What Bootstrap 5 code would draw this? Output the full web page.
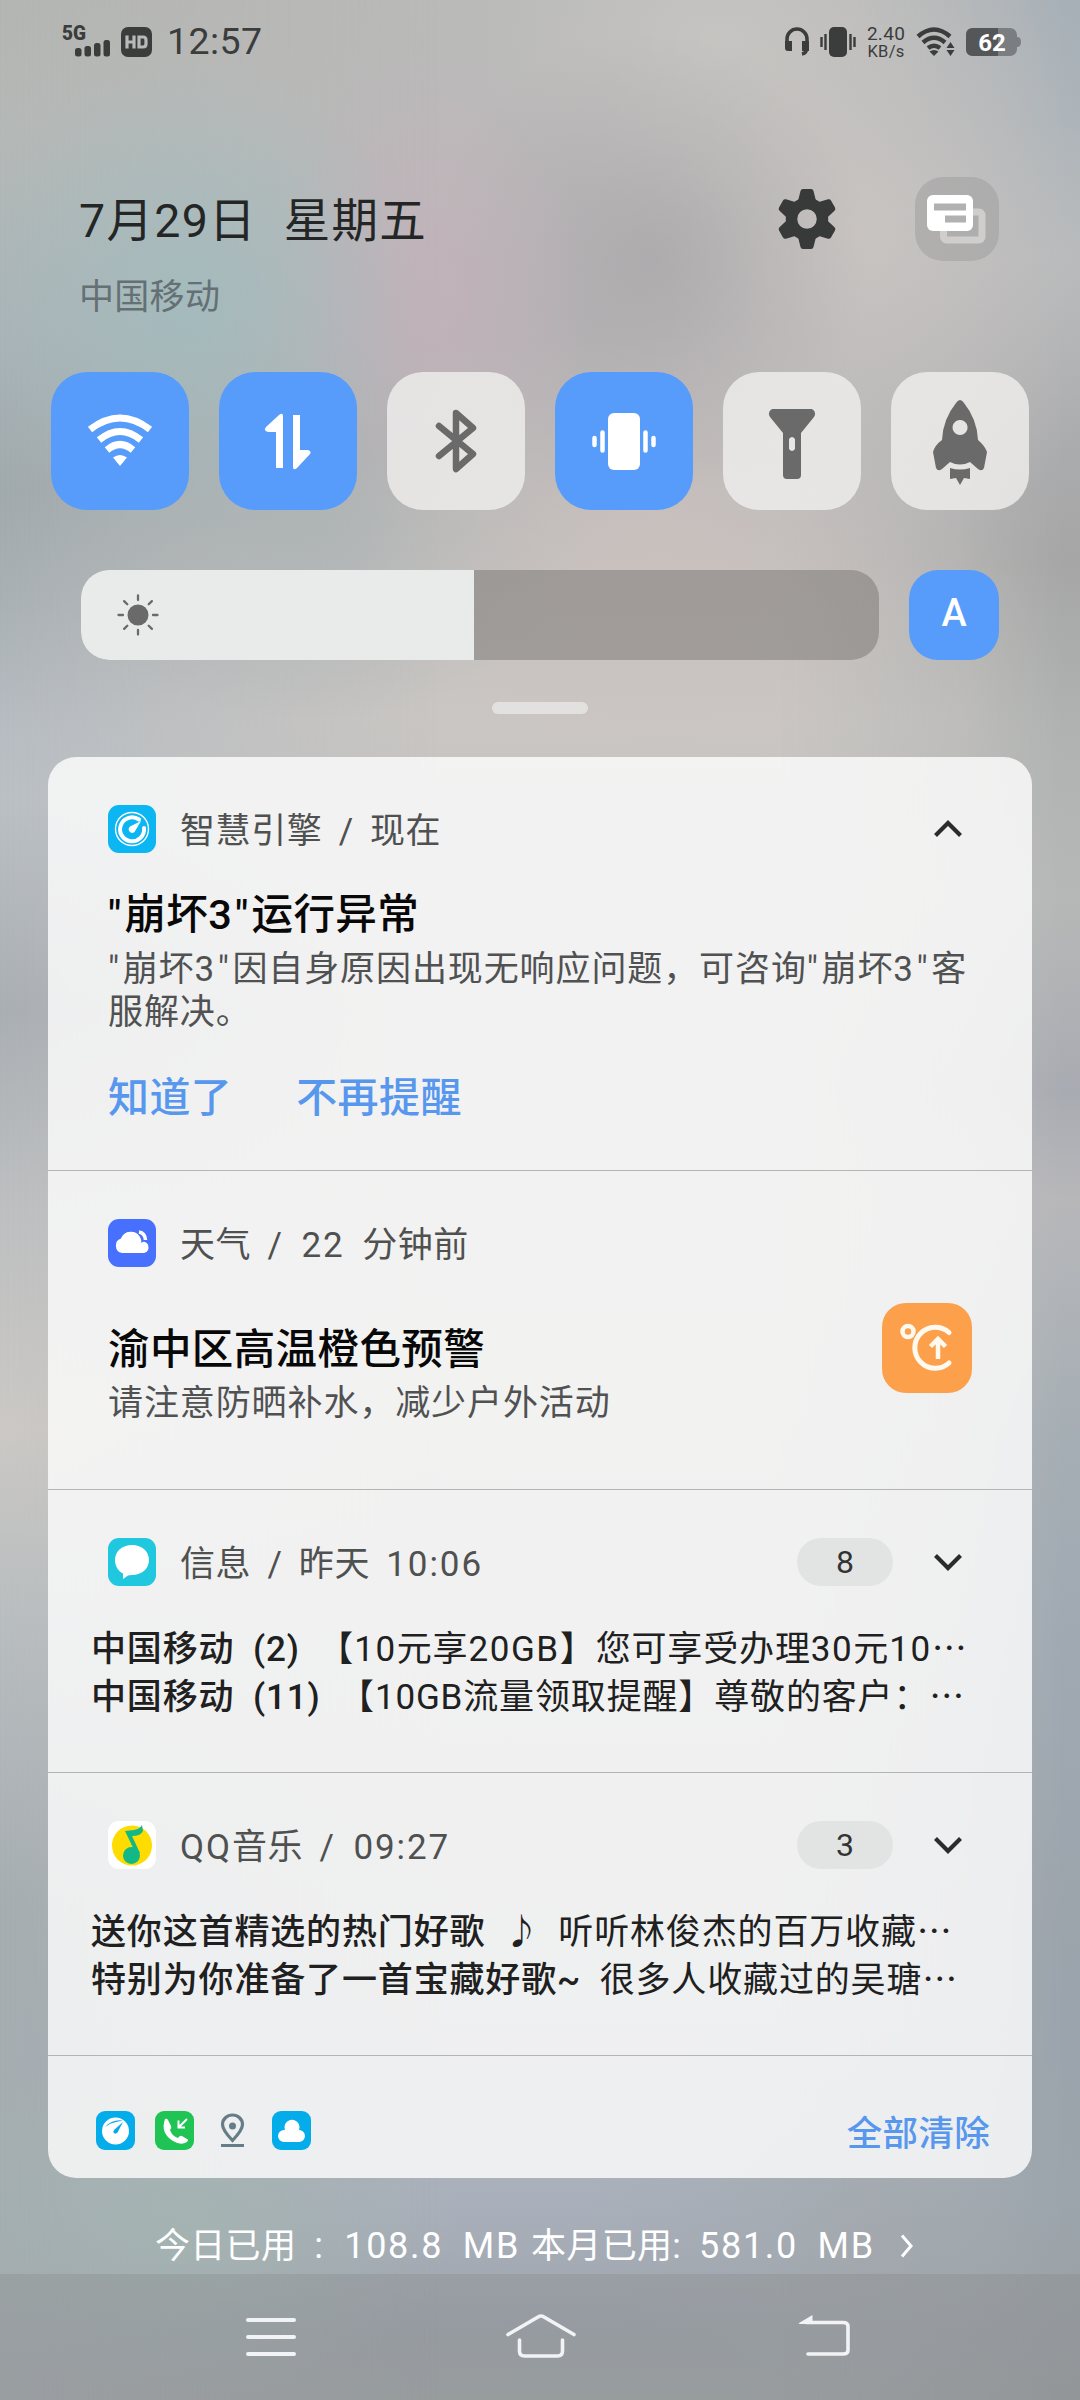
<!DOCTYPE html>
<html lang="zh-CN">
<head>
<meta charset="utf-8">
<meta name="viewport" content="width=device-width, initial-scale=1">
<title>通知中心</title>
<link href="https://cdn.jsdelivr.net/npm/bootstrap@5.3.0/dist/css/bootstrap.min.css" rel="stylesheet">
<style>
  body{font-family:Roboto,"Noto Sans CJK SC",sans-serif;background:#b7b8b8;color:#222;line-height:1}
  .phone{width:1080px;height:2400px;isolation:isolate}
  .wallpaper,.wallpaper div{position:absolute;inset:0}
  .wallpaper{z-index:-1}
  .wp-mid{background:linear-gradient(180deg,#babab9 0,#bbb9ba 200px,#b9b6b8 330px,#b6b6b7 460px,#c4c2c0 600px,#cac6c3 720px,#c6c4c2 800px,#c2c0be 1400px,#b4b6b9 1900px,#aab0bb 2200px,#9ea5ad 2330px,#a0a6a8 2400px)}
  .wp-left{background:linear-gradient(180deg,#b3b5b2 0,#b4b8b6 140px,#aab3b7 330px,#a0a9ac 490px,#a9b0b4 600px,#b6bcc1 730px,#b9bfc3 800px,#a9aeb2 1010px,#bcbec0 1200px,#cbc8c5 1430px,#b8bdbf 1620px,#a6adb1 1900px,#a4acb0 2200px,#a3a9ad 2400px);-webkit-mask-image:linear-gradient(90deg,#000 0,rgba(0,0,0,.45) 220px,transparent 440px);mask-image:linear-gradient(90deg,#000 0,rgba(0,0,0,.45) 220px,transparent 440px)}
  .wp-right{background:linear-gradient(180deg,#a7b0b7 0,#a9b2b8 120px,#b5b8ba 260px,#acadaf 420px,#a6a6a6 560px,#afb2b1 720px,#b6b8b7 900px,#a9abb2 1090px,#b7b7ba 1200px,#a5aeb4 1440px,#a0a9b2 1650px,#9ca4ac 1900px,#9aa4ac 2200px,#999da1 2400px);-webkit-mask-image:linear-gradient(90deg,transparent 780px,rgba(0,0,0,.45) 960px,#000 1060px);mask-image:linear-gradient(90deg,transparent 780px,rgba(0,0,0,.45) 960px,#000 1060px)}
  .wp-spots{background:
    radial-gradient(230px 240px at 190px 300px,rgba(155,190,192,.62),rgba(155,190,192,.3) 50%,rgba(155,190,192,0)),
    radial-gradient(160px 240px at 430px 290px,rgba(200,174,186,.52),rgba(200,174,186,.26) 50%,rgba(200,174,186,0)),
    radial-gradient(220px 230px at 650px 260px,rgba(168,165,168,.7),rgba(168,165,168,.3) 50%,rgba(168,165,168,0)),
    radial-gradient(280px 330px at 860px 230px,rgba(203,198,195,.85),rgba(203,198,195,.4) 50%,rgba(203,198,195,0)),
    radial-gradient(240px 180px at 710px 40px,rgba(199,198,195,.8),rgba(199,198,195,.4) 50%,rgba(199,198,195,0)),
    radial-gradient(320px 220px at 660px 540px,rgba(206,194,190,.7),rgba(206,194,190,.35) 50%,rgba(206,194,190,0)),
    radial-gradient(280px 190px at 310px 530px,rgba(172,179,180,.7),rgba(172,179,180,.35) 50%,rgba(172,179,180,0)),
    radial-gradient(280px 180px at 180px 2220px,rgba(164,182,177,.7),rgba(164,182,177,.3) 50%,rgba(164,182,177,0)),
    radial-gradient(300px 240px at 880px 2230px,rgba(162,168,171,.7),rgba(162,168,171,.3) 50%,rgba(162,168,171,0))}
  .bar-ink{color:#3b3c3c}
  .status-row{height:84px;padding:0 59px 0 62px}
  .date-text{font-size:46.500px;color:#242626;letter-spacing:1.300px;word-spacing:14px}
  .carrier{font-size:35px;color:#647073;letter-spacing:.3px}
  .tile-btn{width:138px;height:138px;border-radius:36px;background:rgba(242,241,240,.78);color:#6a6a6a}
  .tile-btn.on{background:#579cfb;color:#fff}
  .lite-btn{width:84px;height:84px;border-radius:28px;background:rgba(150,150,150,.42)}
  .bright{width:798px;height:90px;border-radius:28px;background:rgba(100,97,94,.4)}
  .bright-fill{width:393px;background:#e9eaea}
  .auto-btn{width:90px;height:90px;border-radius:29px;background:#579cfb;color:#fff;font-size:38px;font-weight:500;padding-bottom:4px}
  .handle{width:96px;height:12px;background:#e3e1df}
  .panel{width:984px;border-radius:28px;background:rgba(252,253,253,.82)}
  .sect{border-bottom:1px solid #b2b4b5;padding:48px 60px 0}
  .head{height:48px;font-size:35px;color:#4f5050;letter-spacing:.6px;word-spacing:7px;padding-right:9px}
  .head .src{padding-top:4px;margin-right:auto}
  .head svg.app{width:48px;height:48px;margin-right:24px}
  .lat{letter-spacing:1.900px}
  .q1{letter-spacing:3.200px}
  .ttl{font-size:41.500px;font-weight:500;color:#080808;letter-spacing:.4px;line-height:54px}
  .bodytxt{font-size:35px;letter-spacing:.9px;line-height:42.700px;color:#505152}
  .bodytxt .q1{letter-spacing:3.500px}
  .act{color:#5797ee;font-size:41px;font-weight:500;letter-spacing:.4px}
  .count{width:96px;height:48px;background:#e2e4e4;color:#333;font-size:32px;letter-spacing:0;margin-right:40px}
  .lines{margin:40px -40px 0 -17px;font-size:35px;letter-spacing:.85px;line-height:48px;color:#202020;word-spacing:9px;white-space:nowrap}
  .lines b{font-weight:500}
  .lines .lat{letter-spacing:1.600px}
  .usage{color:#fff;font-size:35px;height:96px;word-spacing:9px;letter-spacing:.3px}
  .usage .lat{font-size:36px;letter-spacing:1.700px}
  .navb{height:126px;background:rgba(126,128,128,.26);color:#f2f3f4}
</style>
</head>
<body>
<div class="phone position-relative overflow-hidden d-flex flex-column">
  <div class="wallpaper"><div class="wp-mid"></div><div class="wp-left"></div><div class="wp-right"></div><div class="wp-spots"></div></div>

  <header class="status-row d-flex align-items-center justify-content-between bar-ink flex-shrink-0">
    <div class="d-flex align-items-center">
      <svg width="52" height="40" viewBox="0 0 52 40"><text x="0" y="18" font-size="20" font-weight="900" textLength="24" lengthAdjust="spacingAndGlyphs" fill="currentColor">5G</text><g fill="currentColor"><rect x="13" y="26" width="6.500" height="8.500" rx="2.500"/><rect x="22.500" y="24" width="6.500" height="10.500" rx="2.500"/><rect x="32" y="21" width="6.500" height="13.500" rx="2.500"/><rect x="41.500" y="18" width="6.500" height="16.500" rx="2.500"/></g></svg>
      <svg width="31" height="30" viewBox="0 0 31 30" style="margin-left:7px"><rect width="31" height="30" rx="7" fill="currentColor"/><g fill="none" stroke="#b8bab9" stroke-width="3.200"><path d="M6 8.500v13M13 8.500v13M6 15h7M18 10h4q3 0 3 3v4q0 3-3 3h-4z"/></g></svg>
      <span style="font-size:37.500px;margin-left:15px;letter-spacing:.4px">12:57</span>
    </div>
    <div class="d-flex align-items-center">
      <svg width="26" height="32" viewBox="0 0 26 32"><path d="M3 21v-8a10 10 0 0 1 20 0v8q0 6-5 7" fill="none" stroke="currentColor" stroke-width="3.500"/><path d="M1 15h7v10H4q-3 0-3-3zM18 15h7v10h-7z" fill="currentColor"/></svg>
      <svg style="margin-left:10px" width="36" height="30" viewBox="0 0 36 30"><rect x="9" width="18" height="30" rx="5" fill="currentColor"/><path d="M1.500 10v10M5.500 7v16M30.500 7v16M34.500 10v10" stroke="currentColor" stroke-width="2.400"/></svg>
      <div class="text-center" style="font-size:19px;line-height:17px;margin-left:9px;width:42px;letter-spacing:.3px">2.40<br><span style="font-size:16.500px">KB/s</span></div>
      <svg style="margin-left:9px" width="40" height="30" viewBox="0 0 40 30"><g fill="none" stroke="currentColor" stroke-width="4.500"><path d="M2 9.500q16-14 32 0"/><path d="M7 15.500q11-9.500 22 0"/><path d="M12 21q6-4.500 12 0"/></g><path d="M13.500 24.500q4.500-3 9 0L18 29z" fill="currentColor"/><path d="M34.500 15l4 6h-8zM30.500 23h8l-4 6z" fill="currentColor"/></svg>
      <svg style="margin-left:10px" width="55" height="28" viewBox="0 0 55 28"><rect width="51" height="28" rx="7" fill="#7b7e80"/><path d="M7 0h25v28H7q-7 0-7-7V7q0-7 7-7z" fill="#555657"/><path d="M51 9q4 0 4 5t-4 5z" fill="#7b7e80"/><text x="26" y="22.500" font-size="24" font-weight="700" fill="#fff" text-anchor="middle">62</text></svg>
    </div>
  </header>

  <section class="d-flex justify-content-between flex-shrink-0" style="height:288px;padding:93px 81px 0 79px">
    <div class="d-flex flex-column">
      <div class="date-text" style="padding-top:21px">7月29日 星期五</div>
      <div class="carrier" style="margin-top:35px">中国移动</div>
    </div>
    <div class="d-flex">
      <svg style="margin:12px 78px 0 0" width="60" height="60" viewBox="-30 -30 60 60"><g fill="#383939"><path id="g" d="M-9 -18L-6.500 -28Q-6 -30 -4 -30H4Q6 -30 6.500 -28L9 -18Q0 -12-9-18z"/><use href="#g" transform="rotate(60)"/><use href="#g" transform="rotate(120)"/><use href="#g" transform="rotate(180)"/><use href="#g" transform="rotate(240)"/><use href="#g" transform="rotate(300)"/></g><circle r="15.500" fill="none" stroke="#383939" stroke-width="11.500"/></svg>
      <div class="lite-btn"><svg width="84" height="84" viewBox="0 0 84 84"><rect x="28.500" y="35" width="38.500" height="28" rx="3" fill="none" stroke="#cfcecd" stroke-width="7"/><rect x="12" y="18" width="46" height="36" rx="6" fill="#fff"/><path d="M19 26.500h32v7H19zM30 38.500h21v7H30z" fill="#b2b1b1"/></svg></div>
    </div>
  </section>

  <section class="d-flex justify-content-between flex-shrink-0" style="padding:0 51px">
    <div class="tile-btn on d-flex align-items-center justify-content-center"><svg width="66" height="56" viewBox="0 0 66 56"><g fill="none" stroke="currentColor" stroke-width="7"><path d="M3 16.500q30-23 60 0"/><path d="M12 27q21-17 42 0"/><path d="M20 37q13-11 26 0"/></g><path d="M26 44.500q7-5 14 0L33 53z" fill="currentColor"/></svg></div>
    <div class="tile-btn on d-flex align-items-center justify-content-center"><svg width="48" height="60" viewBox="0 0 48 60"><path d="M12 57V21H4Q-1 20 2 16L15 4q4-3 4 1v52zM29 4h7v35h8q4 1 2 4L33 57q-4 3-4-1z" fill="currentColor"/></svg></div>
    <div class="tile-btn d-flex align-items-center justify-content-center"><svg width="42" height="64" viewBox="0 0 42 64"><path d="M4 17L38 45 21 60V4L38 19 4 47" fill="none" stroke="currentColor" stroke-width="6.500" stroke-linecap="round" stroke-linejoin="round"/></svg></div>
    <div class="tile-btn on d-flex align-items-center justify-content-center"><svg width="66" height="58" viewBox="0 0 66 58"><rect x="17" y="1" width="32" height="57" rx="6" fill="currentColor"/><path d="M11.500 20.500v18M54.500 20.500v18M3.500 26v7M62.500 26v7" stroke="currentColor" stroke-width="4.500" stroke-linecap="round"/></svg></div>
    <div class="tile-btn d-flex align-items-center justify-content-center"><svg width="48" height="72" viewBox="0 0 48 72" style="margin-top:6px"><path fill-rule="evenodd" d="M4 1h40q5 3 2 8L33 25v42q0 4-4 4H19q-4 0-4-4V25L2 9Q-1 4 4 1zM21 31v10q3 4 6 0V31q-3-4-6 0z" fill="currentColor"/></svg></div>
    <div class="tile-btn d-flex align-items-center justify-content-center"><svg width="54" height="86" viewBox="0 0 54 86" style="margin-top:4px"><path fill-rule="evenodd" d="M27 0q2 0 4 3Q44 19 45 40q7 6 9 12l-3 16q-2 4-6 1l-8-7q-10 5-20 0l-8 7q-4 3-6-1L0 52q2-7 9-12Q10 19 23 3q2-3 4-3zm0 20a7.500 7.500 0 1 0 .1 0z" fill="currentColor"/><path d="M17 68q10 3 20 0v11l-6-1-4 7-4-7-6 1z" fill="currentColor"/></svg></div>
  </section>

  <section class="d-flex justify-content-between flex-shrink-0" style="padding:60px 81px 0">
    <div class="bright overflow-hidden d-flex">
      <div class="bright-fill d-flex align-items-center"><svg style="margin-left:36px" width="42" height="42" viewBox="-21 -21 42 42"><circle r="10.500" fill="#6a6a6a"/><g stroke="#6a6a6a" stroke-width="2.300" stroke-linecap="round"><path d="M0-15v-4.500M0 15v4.500M-15 0h-4.500M15 0h4.500M-10.700-10.700l-3.200-3.200M10.700 10.700l3.200 3.200M-10.700 10.700l-3.200 3.200M10.700-10.700l3.200-3.200"/></g></svg></div>
    </div>
    <div class="auto-btn d-flex align-items-center justify-content-center">A</div>
  </section>
  <div class="handle rounded-pill mx-auto flex-shrink-0" style="margin-top:42px"></div>

  <main class="panel mx-auto overflow-hidden flex-shrink-0" style="margin-top:43px">
    <article class="sect" style="height:414px">
      <div class="head d-flex align-items-center">
        <svg class="app" viewBox="0 0 48 48"><rect width="48" height="48" rx="11" fill="#0bb6f3"/><circle cx="24" cy="24" r="16.500" fill="none" stroke="#fff" stroke-width="1.400"/><path d="M31 14.500A12 12 0 1 0 36 23" fill="none" stroke="#fff" stroke-width="4" stroke-linecap="round"/><path d="M33 16L26.500 27q-3 2-5-.5t.5-5z" fill="#fff"/></svg>
        <span class="src">智慧引擎 / 现在</span>
        <svg width="30" height="20" viewBox="0 0 30 20"><path d="M2.500 16.500L15 4l12.500 12.500" fill="none" stroke="#2b2b2b" stroke-width="4.200"/></svg>
      </div>
      <div class="ttl" style="margin-top:35px"><span class="q1">"</span>崩坏<span class="q1">3"</span>运行异常</div>
      <div class="bodytxt" style="margin-top:7px"><span class="q1">"</span>崩坏<span class="q1">3"</span>因自身原因出现无响应问题，可咨询<span class="q1">"</span>崩坏<span class="q1">3"</span>客<br>服解决。</div>
      <div class="d-flex act" style="margin-top:44px;gap:64px"><span>知道了</span><span>不再提醒</span></div>
    </article>

    <article class="sect" style="height:319px">
      <div class="head d-flex align-items-center">
        <svg class="app" viewBox="0 0 48 48"><rect width="48" height="48" rx="11" fill="#4670fd"/><path d="M14 34a7.500 7.500 0 0 1-1-14.500A10.500 10.500 0 0 1 32 18q2 4 1 6 4-3 7 1.500 2 7-4 8.500z" fill="#fff"/><path d="M31 13q6 1 6.500 8" fill="none" stroke="#fff" stroke-width="3.500"/></svg>
        <span class="src">天气 <span class="lat">/ 22 </span>分钟前</span>
      </div>
      <div class="d-flex justify-content-between">
        <div><div class="ttl" style="margin-top:56px">渝中区高温橙色预警</div><div class="bodytxt" style="margin-top:6px">请注意防晒补水，减少户外活动</div></div>
        <svg style="margin-top:36px" width="90" height="90" viewBox="0 0 90 90"><rect width="90" height="90" rx="24" fill="#fda04b"/><g fill="none" stroke="#fffaf0"><circle cx="26" cy="28.500" r="5.500" stroke-width="4.500"/><path d="M67 29.500A20.500 20.500 0 1 0 67 60" stroke-width="5" stroke-linecap="round"/><path d="M56 56V37M48.500 43.500L56 36l7.500 7.500" stroke-width="4.500"/></g></svg>
      </div>
    </article>

    <article class="sect" style="height:283px">
      <div class="head d-flex align-items-center">
        <svg class="app" viewBox="0 0 48 48"><rect width="48" height="48" rx="11" fill="#20c8df"/><path d="M24 7c10 0 17 6.500 17 15S34 37 24 37q-3 0-4 .5L15 41v-5.500C10 33 7 28 7 22 7 13.500 14 7 24 7z" fill="#fff"/></svg>
        <span class="src">信息 / 昨天 <span class="lat">10:06</span></span>
        <span class="count rounded-pill d-flex align-items-center justify-content-center">8</span>
        <svg width="30" height="20" viewBox="0 0 30 20"><path d="M2.500 3.500L15 16 27.500 3.500" fill="none" stroke="#2b2b2b" stroke-width="4.200"/></svg>
      </div>
      <div class="lines"><div><b>中国移动 (2)</b> 【<span class="lat">10</span>元享<span class="lat">20GB</span>】您可享受办理<span class="lat">30</span>元<span class="lat">10</span>⋯</div><div><b>中国移动 (11)</b> 【10GB流量领取提醒】尊敬的客户：⋯</div></div>
    </article>

    <article class="sect" style="height:283px">
      <div class="head d-flex align-items-center">
        <svg class="app" viewBox="0 0 48 48"><rect width="48" height="48" rx="11" fill="#fff"/><circle cx="24" cy="24.500" r="20" fill="#ffdc00"/><circle cx="23.500" cy="34.500" r="8.500" fill="#12b886"/><path d="M28 33L17 10l9-1q6-1 8-5l1 6q-2 5-11 5l8 17z" fill="#12b886"/></svg>
        <span class="src"><span class="lat">QQ</span>音乐 <span class="lat">/ 09:27</span></span>
        <span class="count rounded-pill d-flex align-items-center justify-content-center">3</span>
        <svg width="30" height="20" viewBox="0 0 30 20"><path d="M2.500 3.500L15 16 27.500 3.500" fill="none" stroke="#2b2b2b" stroke-width="4.200"/></svg>
      </div>
      <div class="lines"><div><b>送你这首精选的热门好歌 ♪</b> 听听林俊杰的百万收藏⋯</div><div><b>特别为你准备了一首宝藏好歌~</b> 很多人收藏过的吴瑭⋯</div></div>
    </article>

    <footer class="d-flex align-items-center justify-content-between" style="height:122px;padding:0 42px 0 48px">
      <div class="d-flex" style="gap:19.500px;padding-top:27px">
        <svg width="39" height="39" viewBox="0 0 39 39"><rect width="39" height="39" rx="9" fill="#05acea"/><circle cx="19.500" cy="20" r="13.500" fill="#fff"/><path d="M9 16q7-8 18-6.500L20 11q-6 1-11 5zM27 11l-5.500 10.500q-2 2-3.500.5t.5-3.500z" fill="#05acea"/></svg>
        <svg width="39" height="39" viewBox="0 0 39 39"><rect width="39" height="39" rx="9" fill="#1fc454"/><path d="M10 8q2-1 3 1l3 6q1 2-1 4 2 6 8 8 2-3 4-2l5 3q2 1 0 3-6 4-14-1Q5 22 10 8z" fill="#fff"/><path d="M32 8l-8 8M23.500 9.500V16.500H30" fill="none" stroke="#fff" stroke-width="2"/></svg>
        <svg width="39" height="39" viewBox="0 0 39 39"><g fill="none" stroke="#667d87" stroke-width="3.200"><path d="M19.500 29.500Q9.500 19 9.500 13.500a10 9.500 0 0 1 20 0Q29.500 19 19.500 29.500z"/><path d="M8 34.500h23"/></g><circle cx="19.500" cy="15" r="3.500" fill="#667d87"/></svg>
        <svg width="39" height="39" viewBox="0 0 39 39"><rect width="39" height="39" rx="9" fill="#05acea"/><path d="M12 31a6 6 0 0 1 0-12h1a7.500 7.500 0 1 1 14 0 6 6 0 0 1 0 12z" fill="#fff"/></svg>
      </div>
      <div class="act" style="font-size:35.500px;letter-spacing:.3px;padding-top:35px">全部清除</div>
    </footer>
  </main>

  <div class="usage d-flex align-items-center flex-shrink-0" style="padding:40px 0 0 155px;gap:11px">
    <span>今日已用 <span class="lat">: 108.8 MB</span></span><span>本月已用: <span class="lat">581.0 MB</span></span><svg style="margin-left:14px" width="14" height="26" viewBox="0 0 14 26"><path d="M2 2.500L11 13 2 23.500" fill="none" stroke="#fff" stroke-width="3"/></svg>
  </div>

  <nav class="navb d-flex flex-shrink-0">
    <div class="d-flex" style="padding:38px 0 0 246px">
      <svg width="50" height="50" viewBox="0 0 50 50"><path d="M2 8h46M2 25h46M2 42h46" stroke="currentColor" stroke-width="4" stroke-linecap="round"/></svg>
      <svg style="margin-left:210px" width="70" height="50" viewBox="0 0 70 50"><path d="M2 22.500L32 5q3-2 6 0L68 22.500M13.500 28v11q0 5 5 5h33q5 0 5-5V28" fill="none" stroke="currentColor" stroke-width="3.600" stroke-linecap="round"/></svg>
      <svg style="margin-left:222px" width="52" height="50" viewBox="0 0 52 50"><path d="M8 10.500H45q5 0 5 4V38q0 4-5 4H10" fill="none" stroke="currentColor" stroke-width="3.600" stroke-linecap="round"/><path d="M1 11L14.500 3v9H2q-2 0-1-1z" fill="currentColor"/></svg>
    </div>
  </nav>
</div>
<script src="https://cdn.jsdelivr.net/npm/bootstrap@5.3.0/dist/js/bootstrap.bundle.min.js"></script>
</body>
</html>
